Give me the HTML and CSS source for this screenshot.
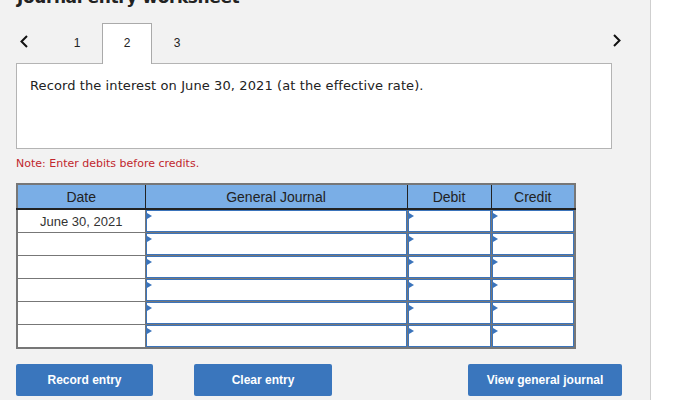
FILE: index.html
```html
<!DOCTYPE html>
<html lang="en">
<head>
  <meta charset="UTF-8">
  <title>Journal entry worksheet</title>
  <link rel="stylesheet" href="styles.css">
</head>
<body>

  <!-- worksheet panel -->
  <div class="panel">
    <h2 class="ws_title">Journal entry worksheet</h2>

    <!-- tabs -->
    <div class="tabs">
      <button class="tab_arrow prev">
        <svg width="10" height="13" viewBox="0 0 10 13"><polyline points="8,1 2.5,6.5 8,12" fill="none" stroke="#111" stroke-width="2"/></svg>
      </button>
      <div class="tab">1</div>
      <div class="tab active">2</div>
      <div class="tab">3</div>
      <button class="tab_arrow next">
        <svg width="10" height="13" viewBox="0 0 10 13"><polyline points="2,1 7.5,6.5 2,12" fill="none" stroke="#111" stroke-width="2"/></svg>
      </button>
    </div>

    <div class="question">
      <p>Record the interest on June 30, 2021 (at the effective rate).</p>
    </div>

    <p class="note">Note: Enter debits before credits.</p>

    <!-- journal table -->
    <table class="journal">
      <colgroup>
        <col class="c_date">
        <col class="c_acct">
        <col class="c_amt">
        <col class="c_amt">
      </colgroup>
      <thead>
        <tr>
          <th>Date</th>
          <th>General Journal</th>
          <th>Debit</th>
          <th>Credit</th>
        </tr>
      </thead>
      <tbody>
        <tr>
          <td class="date">June 30, 2021</td>
          <td class="entry"><span class="mark"></span><input type="text"></td>
          <td class="entry"><span class="mark"></span><input type="text"></td>
          <td class="entry"><span class="mark"></span><input type="text"></td>
        </tr>
        <tr>
          <td class="date"></td>
          <td class="entry"><span class="mark"></span><input type="text"></td>
          <td class="entry"><span class="mark"></span><input type="text"></td>
          <td class="entry"><span class="mark"></span><input type="text"></td>
        </tr>
        <tr>
          <td class="date"></td>
          <td class="entry"><span class="mark"></span><input type="text"></td>
          <td class="entry"><span class="mark"></span><input type="text"></td>
          <td class="entry"><span class="mark"></span><input type="text"></td>
        </tr>
        <tr>
          <td class="date"></td>
          <td class="entry"><span class="mark"></span><input type="text"></td>
          <td class="entry"><span class="mark"></span><input type="text"></td>
          <td class="entry"><span class="mark"></span><input type="text"></td>
        </tr>
        <tr>
          <td class="date"></td>
          <td class="entry"><span class="mark"></span><input type="text"></td>
          <td class="entry"><span class="mark"></span><input type="text"></td>
          <td class="entry"><span class="mark"></span><input type="text"></td>
        </tr>
        <tr>
          <td class="date"></td>
          <td class="entry"><span class="mark"></span><input type="text"></td>
          <td class="entry"><span class="mark"></span><input type="text"></td>
          <td class="entry"><span class="mark"></span><input type="text"></td>
        </tr>
      </tbody>
    </table>

    <!-- buttons -->
    <div class="actions">
      <button class="btn btn_record">Record entry</button>
      <button class="btn btn_clear">Clear entry</button>
      <button class="btn btn_view">View general journal</button>
    </div>
  </div>

</body>
</html>
```

FILE: styles.css
```css
:root {
    --verdana: "DejaVu Sans", Verdana, sans-serif;
    --arial: "Liberation Sans", Arial, sans-serif;
    --panel-bg: #f2f2f2;
    --blue: #3b74bb;
    --head-blue: #7aaee6;
    --grid: #777;
}

* {box-sizing: border-box;}
body {margin: 0; background: #fff; font-family: var(--arial); color: #222; overflow: hidden;}

/* panel */
.panel {width: 651px; height: 400px; background: var(--panel-bg); border-right: 1px solid #cfcfcf; padding-left: 16px; overflow: hidden;}
.ws_title {margin: -15px 0 0 1px; height: 24px; font-family: var(--verdana); font-size: 17px; font-weight: bold; line-height: 24px; color: #222; letter-spacing: -0.4px;}

/* tabs */
.tabs {display: flex; align-items: stretch; height: 40px; margin-top: 14px; width: 608px; position: relative; z-index: 1;}
.tab_arrow {border: 0; background: none; padding: 0; cursor: pointer; display: flex; align-items: center;}
.tab_arrow svg {display: block;}
.tab_arrow.prev {width: 36px; padding-left: 3px; padding-bottom: 3px;}
.tab_arrow.next {margin-left: auto; width: 12px; padding-bottom: 5px;}
.tab {width: 50px; text-align: center; font-size: 12px; line-height: 38px; color: #222; border: 1px solid transparent; border-bottom: 0; height: 41px;}
.tab.active {background: #fff; border-color: #aaa;}

/* question box */
.question {width: 596px; height: 86px; background: #fff; border: 1px solid #b4b4b4; padding: 14px 13px;}
.question p {margin: 0; font-family: var(--verdana); font-size: 13px; color: #222; line-height: 16px; letter-spacing: 0.1px;}

.note {margin: 7px 0 0; font-family: var(--verdana); font-size: 11px; color: #c1272d; line-height: 16px;}

/* journal table */
.journal {margin-top: 11px; border-collapse: collapse; width: 559px; table-layout: fixed; border: 2px solid var(--grid);}
.c_date {width: 128px;}
.c_acct {width: 262px;}
.c_amt {width: 84px;}
.journal th {box-sizing: content-box; background: var(--head-blue); height: 23px; font-weight: normal; font-size: 14px; color: #222; border-left: 1px solid #222; border-bottom: 2px solid #222; padding: 0;}
.journal th:first-child {border-left: 0;}
.journal td {box-sizing: content-box; height: 22px; border: 1px solid var(--grid); padding: 0; background: #fff; vertical-align: middle;}
.journal td.date {text-align: center; font-size: 13px; color: #333;}
.journal td.entry {position: relative; padding: 0;}
.journal td.entry input {display: block; width: 100%; height: 22px; border: 1px solid var(--blue); margin: 0; padding: 0 4px; background: #fff; font-family: var(--arial); font-size: 12px;}
.mark {position: absolute; top: 3px; left: 1px; width: 0; height: 0; border-left: 5px solid var(--blue); border-top: 3px solid transparent; border-bottom: 3px solid transparent;}

/* buttons */
.actions {display: flex; margin-top: 15px; width: 606px;}
.btn {height: 32px; border: 0; border-radius: 2px; background: #3a76bd; color: #fff; font-family: var(--arial); font-size: 12px; font-weight: bold; cursor: pointer;}
.btn_record {width: 137px;}
.btn_clear {width: 138px; margin-left: 41px;}
.btn_view {width: 154px; margin-left: auto;}
```
